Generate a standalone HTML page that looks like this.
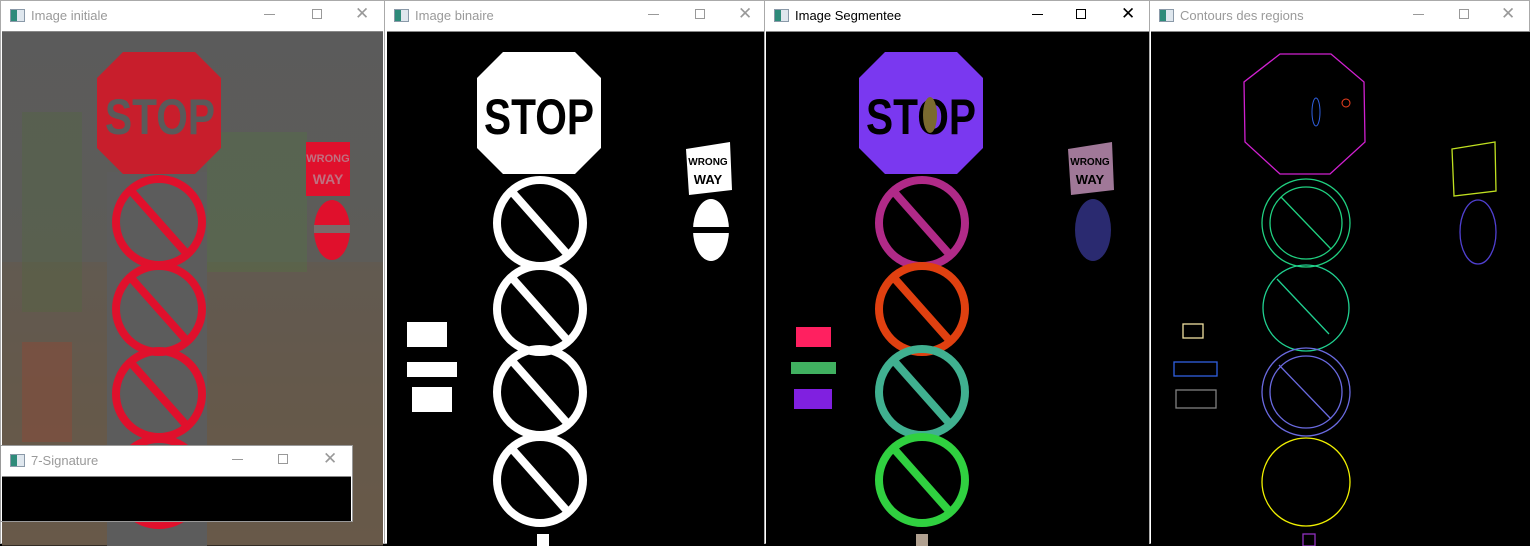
<!DOCTYPE html>
<html><head><meta charset="utf-8"><style>
*{margin:0;padding:0;box-sizing:border-box}
body{width:1530px;height:544px;overflow:hidden;background:#000;font-family:"Liberation Sans",sans-serif;position:relative}
.win{position:absolute;top:0;height:544px;background:#fff;border:1px solid #aaa}
.tb{position:absolute;left:0;right:0;top:0;height:30px;background:#fff}
.ic{position:absolute;left:9px;top:8px;width:15px;height:13px;border:1px solid #8a99a8;background:linear-gradient(90deg,#2e8b7a 0 45%,#dfe7ee 45%)}
.tt{position:absolute;left:30px;top:7px;font-size:13px;color:#9a9a9a}
.ctl{position:absolute;top:6px;font-size:14px;color:#999}
.content{position:absolute;left:1px;top:30px;width:381px;height:514px;border-top:1px solid #888}
svg{display:block}
</style></head><body>

<div class="win" style="left:0;width:385px">
 <div class="tb"><div class="ic"></div><div class="tt">Image initiale</div>
 <div class="ctl" style="left:263px;top:13px;width:11px;border-top:1px solid #999"></div>
 <div class="ctl" style="left:311px;top:8px;width:10px;height:10px;border:1px solid #999"></div>
 <div class="ctl" style="left:354px;top:3px;font-size:17px">✕</div></div>
 <div class="content" style="background:linear-gradient(#5b5b5b 0%,#5d5c58 45%,#645a4c 70%,#6a5a48 100%)">
 <svg width="381" height="514">
  <rect x="0" y="230" width="381" height="284" fill="#66584a" opacity=".5"/>
  <rect x="20" y="80" width="60" height="200" fill="#4e6a3a" opacity=".3"/>
  <rect x="205" y="100" width="100" height="140" fill="#4e7a40" opacity=".3"/>
  <rect x="20" y="310" width="50" height="100" fill="#8a4a38" opacity=".5"/>
  <rect x="105" y="140" width="100" height="374" fill="#5c5c5c"/>
  <polygon points="121,20 193,20 219,46 219,116 193,142 121,142 95,116 95,46" fill="#c81e2c"/>
  <text x="103" y="102" font-size="50" font-weight="bold" fill="#5a5a5a" textLength="110" lengthAdjust="spacingAndGlyphs">STOP</text>
  <g fill="none" stroke="#e0102c" stroke-width="8">
   <circle cx="157" cy="190" r="43"/><line x1="130" y1="160" x2="185" y2="222"/>
   <circle cx="157" cy="277" r="43"/><line x1="130" y1="247" x2="185" y2="309"/>
   <circle cx="157" cy="362" r="43"/><line x1="130" y1="332" x2="185" y2="394"/>
   <circle cx="157" cy="450" r="43"/>
  </g>
  <rect x="304" y="110" width="44" height="54" fill="#e0102c"/>
  <text x="326" y="130" font-size="11" fill="#c07080" text-anchor="middle" font-weight="bold">WRONG</text>
  <text x="326" y="152" font-size="14" fill="#c07080" text-anchor="middle" font-weight="bold">WAY</text>
  <ellipse cx="330" cy="198" rx="18" ry="30" fill="#e0102c"/>
  <rect x="312" y="193" width="36" height="8" fill="#7a6a6a"/>
 </svg></div>
</div>

<div class="win" style="left:384px;width:382px">
 <div class="tb"><div class="ic"></div><div class="tt">Image binaire</div>
 <div class="ctl" style="left:263px;top:13px;width:11px;border-top:1px solid #999"></div>
 <div class="ctl" style="left:310px;top:8px;width:10px;height:10px;border:1px solid #999"></div>
 <div class="ctl" style="left:353px;top:3px;font-size:17px">✕</div></div>
 <div class="content" style="left:2px;width:379px;background:#000">
 <svg width="379" height="514">
  <polygon points="116,20 188,20 214,46 214,116 188,142 116,142 90,116 90,46" fill="#fff"/>
  <text x="97" y="102" font-size="50" font-weight="bold" fill="#000" textLength="110" lengthAdjust="spacingAndGlyphs">STOP</text>
  <g fill="none" stroke="#fff" stroke-width="8">
   <circle cx="153" cy="191" r="43"/><line x1="126" y1="161" x2="181" y2="223"/>
   <circle cx="153" cy="277" r="43"/><line x1="126" y1="247" x2="181" y2="309"/>
   <circle cx="153" cy="360" r="43"/><line x1="126" y1="330" x2="181" y2="392"/>
   <circle cx="153" cy="448" r="43"/><line x1="126" y1="418" x2="181" y2="480"/>
  </g>
  <polygon points="299,117 343,110 345,158 302,163" fill="#fff"/>
  <text x="321" y="133" font-size="10" font-weight="bold" fill="#000" text-anchor="middle">WRONG</text>
  <text x="321" y="152" font-size="13" font-weight="bold" fill="#000" text-anchor="middle">WAY</text>
  <ellipse cx="324" cy="198" rx="18" ry="31" fill="#fff"/>
  <rect x="306" y="195" width="36" height="6" fill="#000"/>
  <rect x="20" y="290" width="40" height="25" fill="#fff"/>
  <rect x="20" y="330" width="50" height="15" fill="#fff"/>
  <rect x="25" y="355" width="40" height="25" fill="#fff"/>
  <rect x="150" y="502" width="12" height="12" fill="#fff"/>
 </svg></div>
</div>

<div class="win" style="left:764px;width:386px">
 <div class="tb"><div class="ic"></div><div class="tt" style="color:#000">Image Segmentee</div>
 <div class="ctl" style="left:267px;top:13px;width:11px;border-top:1px solid #000"></div>
 <div class="ctl" style="left:311px;top:8px;width:10px;height:10px;border:1px solid #000"></div>
 <div class="ctl" style="left:356px;top:3px;font-size:17px;color:#000">✕</div></div>
 <div class="content" style="left:1px;width:383px;background:#000">
 <svg width="383" height="514">
  <polygon points="119,20 191,20 217,46 217,116 191,142 119,142 93,116 93,46" fill="#7a38f0"/>
  <text x="100" y="102" font-size="50" font-weight="bold" fill="#000" textLength="110" lengthAdjust="spacingAndGlyphs">STOP</text>
  <ellipse cx="164" cy="83" rx="7" ry="18" fill="#7a6a30"/>
  <g fill="none" stroke-width="8">
   <circle cx="156" cy="191" r="43" stroke="#b02a88"/><line x1="129" y1="161" x2="184" y2="223" stroke="#b02a88"/>
   <circle cx="156" cy="277" r="43" stroke="#e04010"/><line x1="129" y1="247" x2="184" y2="309" stroke="#e04010"/>
   <circle cx="156" cy="360" r="43" stroke="#40b090"/><line x1="129" y1="330" x2="184" y2="392" stroke="#40b090"/>
   <circle cx="156" cy="448" r="43" stroke="#30d040"/><line x1="129" y1="418" x2="184" y2="480" stroke="#30d040"/>
  </g>
  <polygon points="302,117 346,110 348,158 305,163" fill="#a07898"/>
  <text x="324" y="133" font-size="10" font-weight="bold" fill="#000" text-anchor="middle">WRONG</text>
  <text x="324" y="152" font-size="13" font-weight="bold" fill="#000" text-anchor="middle">WAY</text>
  <ellipse cx="327" cy="198" rx="18" ry="31" fill="#2a2a70"/>
  <rect x="30" y="295" width="35" height="20" fill="#ff2060"/>
  <rect x="25" y="330" width="45" height="12" fill="#40b060"/>
  <rect x="28" y="357" width="38" height="20" fill="#8020e0"/>
  <rect x="150" y="502" width="12" height="12" fill="#b0a090"/>
 </svg></div>
</div>

<div class="win" style="left:1149px;width:381px">
 <div class="tb"><div class="ic"></div><div class="tt">Contours des regions</div>
 <div class="ctl" style="left:263px;top:13px;width:11px;border-top:1px solid #999"></div>
 <div class="ctl" style="left:309px;top:8px;width:10px;height:10px;border:1px solid #999"></div>
 <div class="ctl" style="left:351px;top:3px;font-size:17px">✕</div></div>
 <div class="content" style="left:1px;width:380px;background:#000">
 <svg width="380" height="514">
  <polygon points="129,22 180,22 213,50 214,110 179,142 129,142 94,110 93,50" fill="none" stroke="#d020d0" stroke-width="1.3"/>
  <ellipse cx="165" cy="80" rx="4" ry="14" fill="none" stroke="#3060e0"/>
  <circle cx="195" cy="71" r="4" fill="none" stroke="#f04020"/>
  <g fill="none" stroke-width="1.3">
   <circle cx="155" cy="191" r="44" stroke="#20d080"/><circle cx="155" cy="191" r="36" stroke="#20d080"/>
   <line x1="130" y1="165" x2="180" y2="217" stroke="#20d080"/>
   <circle cx="155" cy="276" r="43" stroke="#20d090"/><line x1="126" y1="247" x2="178" y2="302" stroke="#20d090"/>
   <circle cx="155" cy="360" r="44" stroke="#6a6ae0"/><circle cx="155" cy="360" r="36" stroke="#6a6ae0"/>
   <line x1="128" y1="333" x2="180" y2="387" stroke="#6a6ae0"/>
   <circle cx="155" cy="450" r="44" stroke="#f0f000"/>
   <polygon points="301,117 344,110 345,159 303,164" stroke="#c0e020"/>
   <ellipse cx="327" cy="200" rx="18" ry="32" stroke="#5040d0"/>
   <rect x="32" y="292" width="20" height="14" stroke="#f0e0a0"/>
   <rect x="23" y="330" width="43" height="14" stroke="#3060e0"/>
   <rect x="25" y="358" width="40" height="18" stroke="#808080"/>
   <rect x="152" y="502" width="12" height="12" stroke="#9030c0"/>
  </g>
 </svg></div>
</div>

<div class="win" style="left:0;top:445px;width:353px;height:77px;border-color:#999">
 <div class="tb"><div class="ic"></div><div class="tt">7-Signature</div>
 <div class="ctl" style="left:231px;top:13px;width:11px;border-top:1px solid #999"></div>
 <div class="ctl" style="left:277px;top:8px;width:10px;height:10px;border:1px solid #999"></div>
 <div class="ctl" style="left:322px;top:3px;font-size:17px">✕</div></div>
 <div style="position:absolute;left:1px;top:30px;width:349px;height:45px;background:#000;border-top:1px solid #888"></div>
</div>
</body></html>
